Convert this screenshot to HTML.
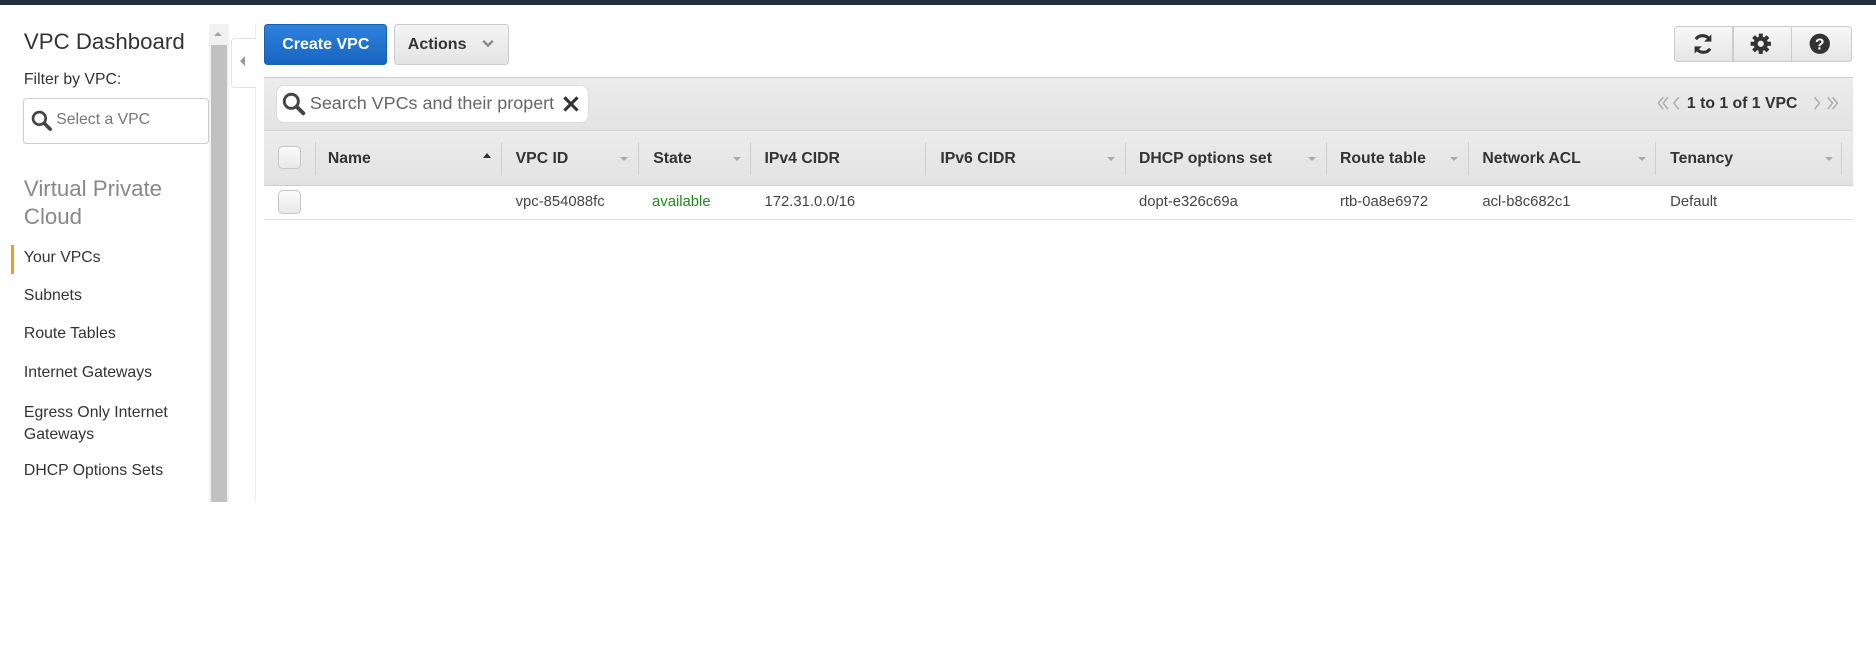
<!DOCTYPE html>
<html><head><meta charset="utf-8"><style>
html,body{margin:0;padding:0;background:#fff;overflow:hidden}
body{width:1876px;height:648px}
#z{zoom:1.1964;position:relative;width:1568px;height:542px;font-family:"Liberation Sans",Arial,sans-serif;color:#333}
.a{position:absolute;white-space:nowrap}
.nav{font-size:13.2px;color:#333;left:20px}
.th{font-size:13.2px;font-weight:bold;color:#333;top:125px}
.sep{position:absolute;top:119px;width:1px;height:27px;background:#cfcfcf}
.ar{position:absolute;top:131px;width:0;height:0;border-left:4px solid transparent;border-right:4px solid transparent;border-top:4px solid #aaa}
.td{font-size:12.4px;color:#444;top:162px}
.cb{position:absolute;width:18px;height:18px;border:1px solid #c6c6c6;border-radius:4px;background:linear-gradient(#fafafa,#e9e9e9)}
</style></head><body><div id="z">
<div class="a" style="left:0;top:0;width:1568px;height:4px;background:#232f3e"></div>

<div class="a" style="left:20px;top:24px;font-size:18.6px;color:#333">VPC Dashboard</div>
<div class="a" style="left:20px;top:59px;font-size:13.2px;color:#333">Filter by VPC:</div>
<div class="a" style="left:19px;top:82px;width:154px;height:37px;border:1px solid #ccc;border-radius:3px"></div>
<svg class="a" style="left:26px;top:92px" width="18" height="18" viewBox="0 0 18 18"><circle cx="7" cy="7" r="5.3" fill="none" stroke="#444" stroke-width="2.2"/><path d="M11 11L16 16" stroke="#444" stroke-width="3" stroke-linecap="round"/></svg>
<div class="a" style="left:47px;top:93px;font-size:13.2px;color:#777">Select a VPC</div>
<div class="a" style="left:20px;top:146px;font-size:18.6px;color:#888;line-height:24px">Virtual Private<br>Cloud</div>
<div class="a" style="left:9px;top:205px;width:3px;height:24px;background:#f59b1f"></div>
<div class="a nav" style="top:208px">Your VPCs</div>
<div class="a nav" style="top:240px">Subnets</div>
<div class="a nav" style="top:272px">Route Tables</div>
<div class="a nav" style="top:304px">Internet Gateways</div>
<div class="a nav" style="top:336px;line-height:18px">Egress Only Internet<br>Gateways</div>
<div class="a nav" style="top:386px">DHCP Options Sets</div>

<div class="a" style="left:175px;top:20px;width:16px;height:400px;background:#f1f1f1"></div>
<div class="a" style="left:176px;top:38px;width:14px;height:382px;background:#c1c1c1"></div>
<div class="a" style="left:179px;top:27px;border-left:4px solid transparent;border-right:4px solid transparent;border-bottom:4px solid #a3a3a3"></div>
<div class="a" style="left:213px;top:20px;width:1px;height:400px;background:#eee"></div>
<div class="a" style="left:193px;top:32px;width:20px;height:40px;border:1px solid #e3e3e3;border-right:none;border-radius:3px 0 0 3px;background:#fff"></div>
<div class="a" style="left:201px;top:47px;border-top:5px solid transparent;border-bottom:5px solid transparent;border-right:5px solid #999"></div>

<div class="a" style="left:221px;top:20px;width:101px;height:33px;border:1px solid #1a5fb4;border-radius:3px;background:linear-gradient(#2f82dc,#1665c1);color:#fff;font-weight:bold;font-size:13.4px;line-height:33px;text-align:center">Create VPC</div>
<div class="a" style="left:329px;top:20px;width:95px;height:33px;border:1px solid #ccc;border-radius:3px;background:linear-gradient(#f4f4f4,#e4e4e4);font-weight:bold;font-size:13.4px;line-height:33px;color:#333"><span style="margin-left:11px">Actions</span></div>
<svg class="a" style="left:403px;top:33px" width="10" height="8"><path d="M1 1.5L5 5.5L9 1.5" fill="none" stroke="#888" stroke-width="2"/></svg>

<div class="a" style="left:1399px;top:22px;width:147px;height:28px;border:1px solid #ccc;border-radius:3px;background:linear-gradient(#f7f7f7,#e6e6e6)"></div>
<div class="a" style="left:1448px;top:22px;width:1px;height:30px;background:#ccc"></div>
<div class="a" style="left:1497px;top:22px;width:1px;height:30px;background:#ccc"></div>
<svg class="a" style="left:1413px;top:27px" width="20" height="20" viewBox="0 0 20 20"><path d="M16 7A7 7 0 0 0 4 6" fill="none" stroke="#333" stroke-width="2.6"/><path d="M17 2v6h-6z" fill="#333"/><path d="M4 13A7 7 0 0 0 16 14" fill="none" stroke="#333" stroke-width="2.6"/><path d="M3 18v-6h6z" fill="#333"/></svg>
<svg class="a" style="left:1463px;top:28px" width="18" height="18" viewBox="0 0 18 18"><g fill="#333"><circle cx="9" cy="9" r="6"/><rect x="7.3" y="0.5" width="3.4" height="17"/><rect x="0.5" y="7.3" width="17" height="3.4"/><rect x="7.3" y="0.5" width="3.4" height="17" transform="rotate(45 9 9)"/><rect x="7.3" y="0.5" width="3.4" height="17" transform="rotate(-45 9 9)"/></g><circle cx="9" cy="9" r="2.6" fill="#eee"/></svg>
<svg class="a" style="left:1512px;top:28px" width="18" height="18" viewBox="0 0 18 18"><circle cx="9" cy="9" r="8.5" fill="#333"/><text x="9" y="14" font-family="Liberation Sans" font-weight="bold" font-size="13" fill="#fff" text-anchor="middle">?</text></svg>

<div class="a" style="left:221px;top:64px;width:1328px;height:44px;border-top:1px solid #ccc;background:linear-gradient(#ececec,#e3e3e3)"></div>
<div class="a" style="left:231px;top:71px;width:260px;height:30px;border:1px solid #ddd;border-radius:7px;background:#fff"></div>
<svg class="a" style="left:236px;top:77px" width="20" height="20" viewBox="0 0 18 18"><circle cx="7" cy="7" r="5.3" fill="none" stroke="#444" stroke-width="2.2"/><path d="M11 11L16 16" stroke="#444" stroke-width="3" stroke-linecap="round"/></svg>
<div class="a" style="left:259px;top:78px;width:205px;overflow:hidden;font-size:15px;color:#666">Search VPCs and their properties</div>
<svg class="a" style="left:470px;top:79px" width="15" height="15"><path d="M2 2L13 13M13 2L2 13" stroke="#333" stroke-width="2.6"/></svg>
<svg class="a" style="left:1384px;top:80px" width="24" height="12"><path d="M6 1L2 6L6 11M10 1L6 6L10 11M19 1L15 6L19 11" fill="none" stroke="#aaa" stroke-width="1.2"/></svg>
<div class="a" style="left:1410px;top:79px;font-size:13.2px;font-weight:bold;color:#333">1 to 1 of 1 VPC</div>
<svg class="a" style="left:1514px;top:80px" width="24" height="12"><path d="M3 1L7 6L3 11M14 1L18 6L14 11M18 1L22 6L18 11" fill="none" stroke="#aaa" stroke-width="1.2"/></svg>

<div class="a" style="left:221px;top:109px;width:1328px;height:45px;border-top:1px solid #d5d5d5;border-bottom:1px solid #cfcfcf;background:linear-gradient(#ececec,#e2e2e2)"></div>
<div class="cb" style="left:232px;top:122px"></div>
<div class="sep" style="left:263px"></div><div class="sep" style="left:419px"></div><div class="sep" style="left:533px"></div><div class="sep" style="left:627px"></div><div class="sep" style="left:773px"></div><div class="sep" style="left:940px"></div><div class="sep" style="left:1108px"></div><div class="sep" style="left:1227px"></div><div class="sep" style="left:1383px"></div><div class="sep" style="left:1539px"></div>
<div class="a th" style="left:274px">Name</div>
<div class="a" style="left:404px;top:128px;border-left:4px solid transparent;border-right:4px solid transparent;border-bottom:5px solid #333"></div>
<div class="a th" style="left:431px">VPC ID</div><div class="ar" style="left:518px"></div>
<div class="a th" style="left:546px">State</div><div class="ar" style="left:613px"></div>
<div class="a th" style="left:639px">IPv4 CIDR</div>
<div class="a th" style="left:786px">IPv6 CIDR</div><div class="ar" style="left:925px"></div>
<div class="a th" style="left:952px">DHCP options set</div><div class="ar" style="left:1093px"></div>
<div class="a th" style="left:1120px">Route table</div><div class="ar" style="left:1212px"></div>
<div class="a th" style="left:1239px">Network ACL</div><div class="ar" style="left:1369px"></div>
<div class="a th" style="left:1396px">Tenancy</div><div class="ar" style="left:1525px"></div>

<div class="a" style="left:221px;top:183px;width:1328px;height:1px;background:#ddd"></div>
<div class="cb" style="left:232px;top:159px"></div>
<div class="a td" style="left:431px">vpc-854088fc</div>
<div class="a td" style="left:545px;color:#1d8a1d">available</div>
<div class="a td" style="left:639px">172.31.0.0/16</div>
<div class="a td" style="left:952px">dopt-e326c69a</div>
<div class="a td" style="left:1120px">rtb-0a8e6972</div>
<div class="a td" style="left:1239px">acl-b8c682c1</div>
<div class="a td" style="left:1396px">Default</div>
</div></body></html>
